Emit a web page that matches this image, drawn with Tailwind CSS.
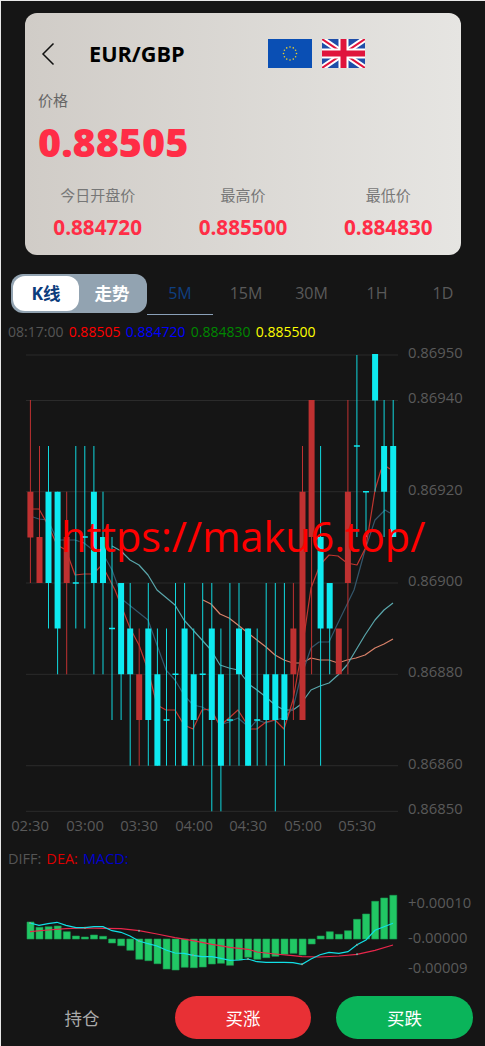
<!DOCTYPE html>
<html lang="zh">
<head>
<meta charset="utf-8">
<script src="https://cdn.jsdelivr.net/npm/@tailwindcss/browser@4"></script>
</head>
<body class="bg-[#151515] font-['Open_Sans','Noto_Sans_CJK_SC',sans-serif] overflow-hidden">
<div class="w-[485px] h-[1046px] flex flex-col border-t border-l border-[#e8e8e8] overflow-hidden">

  <section class="mt-3 ml-6 w-[436px] h-[242px] shrink-0 rounded-xl bg-gradient-to-r from-[#d0ccc7] to-[#e6e5e2] flex flex-col">
    <div class="flex items-center h-[29px] mt-[26px]">
      <svg class="ml-[16px] w-[14px] h-[24px]" viewBox="0 0 14 24" fill="none" stroke="#111" stroke-width="1.5"><path d="M12.5 1.5 2 12l10.5 10.500"/></svg>
      <span class="ml-[34px] w-[179px] text-[21.7px] leading-none font-bold text-black">EUR/GBP</span>
      <svg class="w-[44px] h-[29px]" viewBox="0 0 44 29">
        <rect width="44" height="29" fill="#0a4fb4"/>
        <g fill="#e8cf2e">
          <circle cx="22" cy="8" r=".8"/><circle cx="25.300" cy="8.900" r=".8"/><circle cx="27.600" cy="11.200" r=".8"/><circle cx="28.500" cy="14.500" r=".8"/><circle cx="27.600" cy="17.800" r=".8"/><circle cx="25.300" cy="20.100" r=".8"/><circle cx="22" cy="21" r=".8"/><circle cx="18.700" cy="20.100" r=".8"/><circle cx="16.400" cy="17.800" r=".8"/><circle cx="15.500" cy="14.500" r=".8"/><circle cx="16.400" cy="11.200" r=".8"/><circle cx="18.700" cy="8.900" r=".8"/>
        </g>
      </svg>
      <svg class="ml-[10px] w-[43px] h-[29px]" viewBox="0 0 43 29">
        <rect width="43" height="29" fill="#1f4ea8"/>
        <path d="M0 0 43 29M43 0 0 29" stroke="#fff" stroke-width="6"/>
        <path d="M0 0 43 29M43 0 0 29" stroke="#e0143c" stroke-width="2"/>
        <path d="M21.500 0v29M0 14.500h43" stroke="#fff" stroke-width="10"/>
        <path d="M21.500 0v29M0 14.500h43" stroke="#e0143c" stroke-width="6"/>
      </svg>
    </div>
    <div class="ml-[13px] mt-[22px] text-[15px] leading-[20px] text-[#666]">价格</div>
    <div class="ml-[13px] mt-[7px] h-[50px] text-[39.5px] leading-[50px] font-extrabold text-[#ff2d46]">0.88505</div>
    <div class="mt-[18px] grid grid-cols-3 text-center">
      <div><div class="text-[15px] leading-[20px] text-[#777]">今日开盘价</div><div class="mt-[10px] text-[20.7px] leading-[24px] font-bold text-[#ff2d46]">0.884720</div></div>
      <div><div class="text-[15px] leading-[20px] text-[#777]">最高价</div><div class="mt-[10px] text-[20.7px] leading-[24px] font-bold text-[#ff2d46]">0.885500</div></div>
      <div><div class="text-[15px] leading-[20px] text-[#777]">最低价</div><div class="mt-[10px] text-[20.7px] leading-[24px] font-bold text-[#ff2d46]">0.884830</div></div>
    </div>
  </section>

  <nav class="mt-[19px] ml-[10px] h-[41px] shrink-0 flex items-start">
    <div class="w-[136px] h-[39px] rounded-xl bg-[#92a3b1] p-[2px] flex items-center">
      <div class="w-[66px] h-[35px] rounded-xl bg-white flex items-center justify-center text-[17.5px] font-bold text-[#0b3c7c]">K线</div>
      <div class="flex-1 text-center text-[17.5px] font-bold text-white">走势</div>
    </div>
    <div class="flex-1 flex text-base text-center text-[#5a5a5a]">
      <div class="w-[66px] h-[41px] leading-[39px] border-b border-[#8aa0b8] text-[#0f3f80]">5M</div>
      <div class="w-[66px] leading-[39px]">15M</div>
      <div class="w-[65px] leading-[39px]">30M</div>
      <div class="w-[66px] leading-[39px]">1H</div>
      <div class="w-[66px] leading-[39px]">1D</div>
    </div>
  </nav>

  <div class="mt-[7px] ml-[7px] h-[20px] shrink-0 flex gap-[5.300px] text-sm leading-[20px] text-[#555]">
    <span>08:17:00</span><span class="text-[#f00]">0.88505</span><span class="text-[#00f]">0.884720</span><span class="text-[#080]">0.884830</span><span class="text-[#ff0]">0.885500</span>
  </div>

  <div class="relative h-[500px] shrink-0 -ml-px -mt-[2px]">
    <svg class="block" width="485" height="500" viewBox="0 340 485 500" font-size="14.800" fill="#5a5a5a">
      <path d="M26 355H398M26 400.500H398M26 491.700H398M26 583H398M26 674.300H398M26 765.700H398M26 811.300H398" stroke="#2b2b2b" stroke-width="1"/>
      <g font-family="Open Sans">
        <text x="408" y="357.500">0.86950</text><text x="408" y="403">0.86940</text><text x="408" y="494.500">0.86920</text><text x="408" y="586">0.86900</text><text x="408" y="677">0.86880</text><text x="408" y="768.500">0.86860</text><text x="408" y="814">0.86850</text>
        <g text-anchor="middle"><text x="30" y="831">02:30</text><text x="85" y="831">03:00</text><text x="139" y="831">03:30</text><text x="194" y="831">04:00</text><text x="248" y="831">04:30</text><text x="303" y="831">05:00</text><text x="357" y="831">05:30</text></g>
      </g>
      <g fill="none" stroke-width="1.200" stroke-linejoin="round">
        <polyline stroke="#d9826a" points="203,600 211,604 220,614 229,618 238,625 248,633 257,640 266,647 275,655 284,660 293,663 302,663 311,658 320,660 329,660 338,663 347,660 356,658 365,655 375,648 384,644 393,639"/>
        <polyline stroke="#5aa6ab" points="112,546 121,551 130,560 139,565 148,575 157,590 175,605 184,620 193,630 202,640 211,650 220,665 229,668 238,670 250,685 257,690 266,697 275,705 284,710 293,710 300,705 311,690 320,686 329,683 338,675 347,665 356,650 365,635 375,620 384,610 393,603"/>
        <polyline stroke="#34566b" points="30,516 39,519 48,520 57,540 66,540 75,540 84,543 93,550 102,552 112,570 123,600 148,620 157,645 166,670 175,680 184,695 193,705 202,707 211,712 220,725 229,722 238,718 250,728 257,720 266,723 275,720 284,718 293,708 300,680 311,648 319,642 329,642 337,625 354,590 365,550 375,520 385,510 390,513"/>
        <polyline stroke="#c0352f" points="30,509 39,509 48,525 57,545 66,550 75,575 84,574 93,574 102,565 115,590 130,628 139,645 148,670 157,705 166,710 175,710 184,725 193,729 202,710 211,709 220,726 229,718 238,710 250,729 257,729 266,722 275,720 284,729 293,700 302,650 311,588 320,565 329,555 338,556 347,563 357,565 366,547 375,490 381,470 387,467 390,469"/>
      </g>
      <path fill="none" stroke="#bf3131" d="M30.400 400V583M39.500 446V583M66.700 491.700V674.300M139.200 628.500V765.700M293.400 583V720M302.500 446V720M311.600 400V674.300M347.900 400V674.300"/>
      <path fill="none" stroke="#10d8de" d="M48.500 446V628.500M57.600 491.700V674.300M75.800 446V628.500M84.800 446V628.500M93.900 446V674.300M103 491.700V674.300M112 537V720M121.100 583V720M130.200 583V765.700M148.300 583V765.700M157.400 628.500V765.700M166.500 628.500V765.700M175.500 583V765.700M184.600 583V765.700M193.700 628.500V765.700M202.700 583V765.700M211.800 583V811.300M220.900 628.500V811.300M229.900 583V765.700M239 583V765.700M248.100 628.500V765.700M257.200 628.500V765.700M266.200 583V765.700M275.300 583V811.300M284.400 583V765.700M320.600 446V765.700M329.700 583V674.300M356.900 355V537M366 491.700V537M375.100 400V491.700M384.100 400V537M393.200 400V446"/>
      <path fill="#bf3131" d="M27.400 491.700h6v45.700h-6zM36.500 537h6v46h-6zM63.700 537h6v46h-6zM136.200 674.300h6v45.700h-6zM290.400 628.500h6v45.800h-6zM299.500 491.700h6v228.300h-6zM308.600 400h6v137h-6zM335.800 628.500h6v45.800h-6zM344.900 491.700h6v91.300h-6z"/>
      <path fill="#0eeaf0" d="M45.500 491.700h6v91.300h-6zM54.600 491.700h6v136.800h-6zM72.800 582.300h6v1.500h-6zM81.800 536.300h6v1.500h-6zM90.900 491.700h6v91.300h-6zM100 537h6v46h-6zM109 627.800h6v1.500h-6zM118.100 583h6v91.300h-6zM127.200 628.500h6v45.800h-6zM145.300 628.500h6v91.500h-6zM154.400 674.300h6v91.400h-6zM163.500 719.300h6v1.500h-6zM172.500 673.500h6v1.500h-6zM181.600 628.500h6v137.200h-6zM190.700 674.300h6v45.700h-6zM199.700 673.500h6v1.500h-6zM208.800 628.500h6v91.500h-6zM217.900 674.300h6v91.400h-6zM226.900 719.300h6v1.500h-6zM236 628.500h6v45.800h-6zM245.100 628.500h6v137.200h-6zM254.200 719.300h6v1.500h-6zM263.200 674.300h6v45.700h-6zM272.300 674.300h6v45.700h-6zM281.400 674.300h6v45.700h-6zM317.600 537h6v91.500h-6zM326.700 583h6v45.500h-6zM353.900 445.300h6v1.500h-6zM363 491h6v1.500h-6zM372.100 354h6v46.500h-6zM381.100 446h6v45.700h-6zM390.200 446h6v91h-6z"/>
    </svg>
    <div class="absolute left-[61px] top-[170px] whitespace-nowrap text-[41.4px] leading-[52px] text-[#f00]">https://maku6.top/</div>
  </div>

  <div class="ml-[7px] mt-[9px] h-[20px] shrink-0 flex gap-[5px] text-[14.5px] leading-[20px] text-[#555]">
    <span>DIFF:</span><span class="text-[#d00]">DEA:</span><span class="text-[#00c]">MACD:</span>
  </div>

  <svg class="block -ml-px mt-px shrink-0" width="485" height="120" viewBox="0 870 485 120" font-size="14.800" fill="#5a5a5a">
    <path fill="#21c764" stroke="#1a9a52" stroke-width=".6" d="M27 922h7v17h-7zM36 927.300h7v11.700h-7zM45.100 926.700h7v12.300h-7zM54.200 926h7v13h-7zM63.300 931.700h7v7.300h-7zM72.400 936h7v3h-7zM81.400 937h7v2h-7zM90.500 935h7v4h-7zM99.600 936.300h7v2.700h-7zM108.600 939h7v4h-7zM117.700 939h7v6.700h-7zM126.800 939h7v11.300h-7zM135.800 939h7v20.300h-7zM144.900 939h7v21.700h-7zM154 939h7v24.700h-7zM163.100 939h7v30h-7zM172.100 939h7v31h-7zM181.200 939h7v28.300h-7zM190.300 939h7v28.700h-7zM199.300 939h7v28h-7zM208.400 939h7v25h-7zM217.500 939h7v24.300h-7zM226.500 939h7v26.300h-7zM235.600 939h7v21h-7zM244.700 939h7v18.300h-7zM253.800 939h7v20.300h-7zM262.800 939h7v18.700h-7zM271.900 939h7v17.300h-7zM281 939h7v15.300h-7zM290 939h7v14.300h-7zM299.100 939h7v16h-7zM308.200 939h7v5h-7zM317.200 936h7v3h-7zM326.300 931.700h7v7.300h-7zM335.400 934.300h7v4.700h-7zM344.500 930.700h7v8.300h-7zM353.500 919.300h7v19.700h-7zM362.600 914h7v25h-7zM371.700 901.300h7v37.700h-7zM380.700 898h7v41h-7zM389.800 895.300h7v43.700h-7z"/>
    <polyline fill="none" stroke="#e8264a" stroke-width="1.200" points="30,931.700 48,930 66,928.700 85,928 103,928.300 121,928.700 139,930.700 157,934 175,937.700 193,940.700 212,944.300 230,947.300 248,949.300 257,952 275,954 293,955.700 302,956.700 320,957 339,956 357,954.300 375,950.300 393,945"/>
    <polyline fill="none" stroke="#11e0e6" stroke-width="1.200" points="30,923 39,925.300 48,923.700 57,922.300 66,925.300 76,927.700 85,927.700 94,926.700 103,926.700 112,930.700 121,932.300 130,936 139,941 148,943.700 157,946 166,950 175,953 184,953.300 193,955.300 202,956.700 212,956.700 221,958.300 230,960.300 239,960 248,959 257,961.700 266,962.300 275,962.300 284,962.300 293,962.700 302,964.300 311,959 320,954.700 329,952.300 339,953.300 348,951.700 357,944.700 366,940 375,930.300 384,926.700 393,923.300"/>
    <g fill="#7fa89a"><circle cx="30" cy="923" r="1"/><circle cx="85" cy="927.700" r="1"/><circle cx="139" cy="941" r="1"/><circle cx="193" cy="955.300" r="1"/><circle cx="248" cy="959" r="1"/><circle cx="302" cy="964.300" r="1"/><circle cx="357" cy="944.700" r="1"/><circle cx="139" cy="930.700" r="1"/><circle cx="357" cy="954.300" r="1"/></g>
    <g font-family="Open Sans"><text x="408" y="908">+0.00010</text><text x="408" y="942.500">-0.00000</text><text x="408" y="973">-0.00009</text></g>
  </svg>

  <footer class="mt-[6px] -ml-px flex items-start">
    <div class="w-[164px] h-[43px] leading-[45px] text-center text-[17.5px] text-[#aaa]">持仓</div>
    <div class="ml-[11px] w-[136px] h-[43px] rounded-[22px] bg-[#e83035] leading-[45px] text-center text-[17.5px] text-white">买涨</div>
    <div class="ml-[25px] w-[137px] h-[43px] rounded-[22px] bg-[#0ab45a] leading-[45px] text-center text-[17.5px] text-white">买跌</div>
  </footer>
</div>
</body>
</html>
